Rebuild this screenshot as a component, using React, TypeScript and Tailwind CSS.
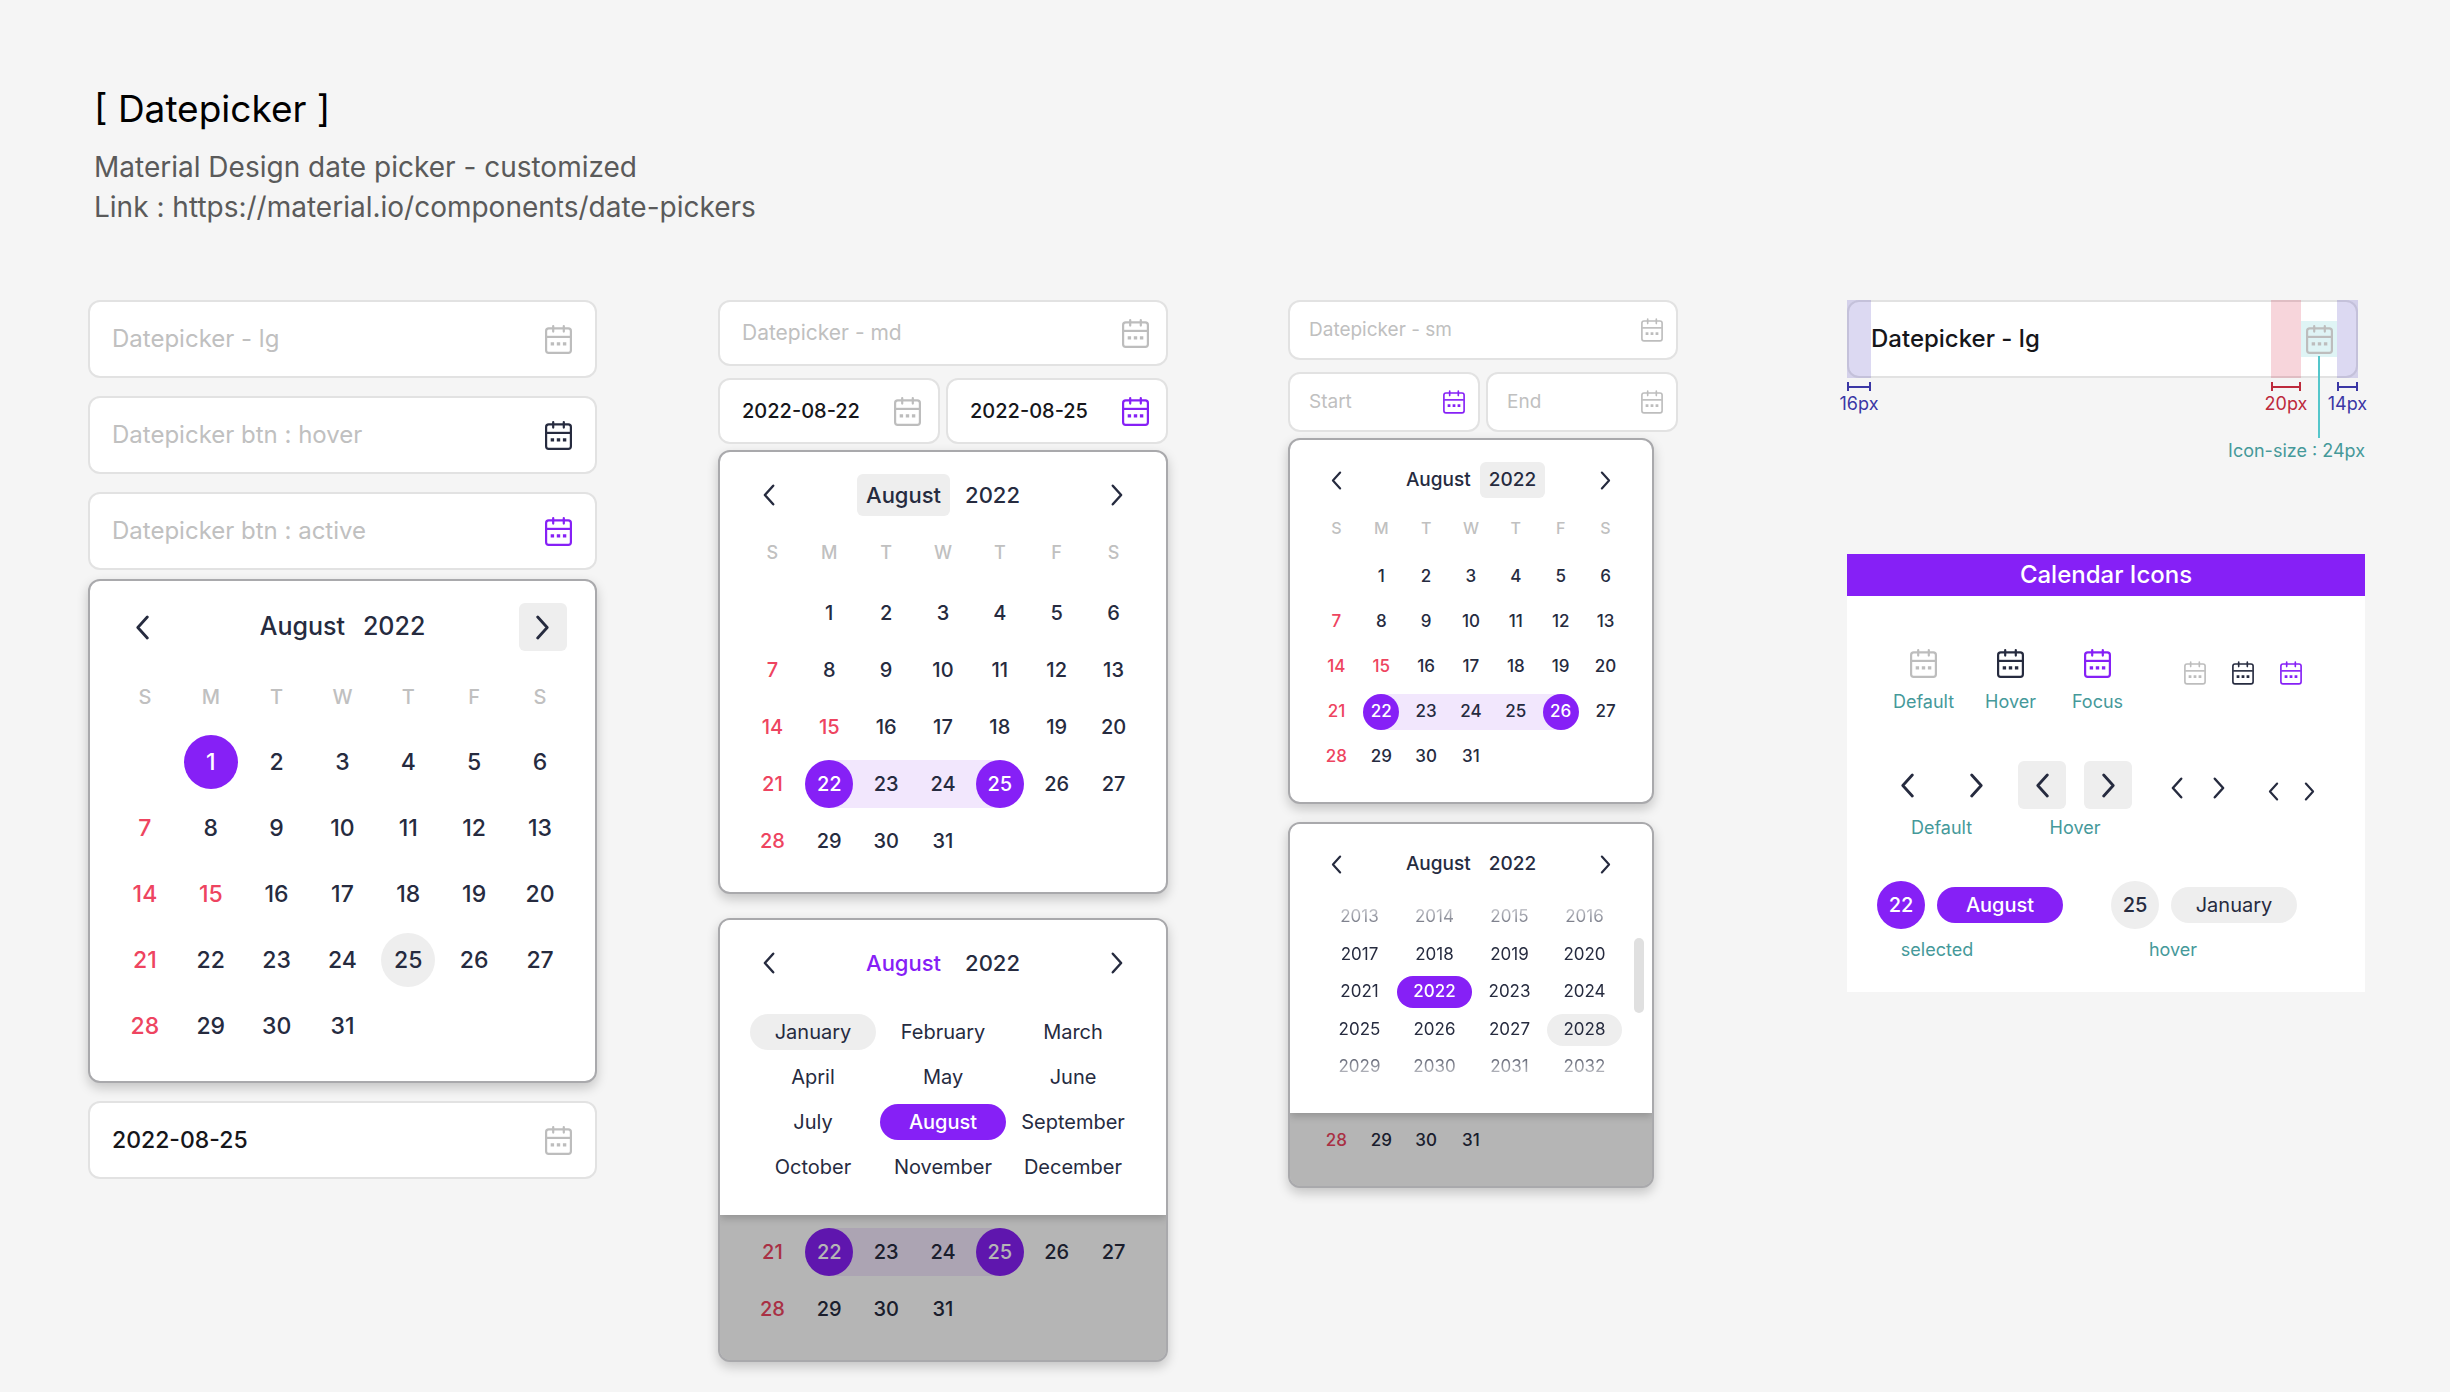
import React from "react";

type Size = "lg" | "md" | "sm";
type Mark = "selected" | "hover" | "start" | "mid" | "end";

const WEEKDAYS = ["S", "M", "T", "W", "T", "F", "S"];
const WEEKDAY_NAMES = ["Sunday", "Monday", "Tuesday", "Wednesday", "Thursday", "Friday", "Saturday"];
const MONTHS = [
  "January", "February", "March", "April", "May", "June",
  "July", "August", "September", "October", "November", "December",
];
const YEARS = Array.from({ length: 20 }, (_, i) => 2013 + i);
const WEEKS: (number | null)[][] = [
  [null, 1, 2, 3, 4, 5, 6],
  [7, 8, 9, 10, 11, 12, 13],
  [14, 15, 16, 17, 18, 19, 20],
  [21, 22, 23, 24, 25, 26, 27],
  [28, 29, 30, 31, null, null, null],
];
const HOLIDAYS = [7, 14, 15, 21, 28];

function CalendarIcon({ small = false }: { small?: boolean }) {
  return (
    <svg
      viewBox="0 0 27 29"
      fill="none"
      stroke="currentColor"
      strokeWidth={small ? 2 : 2.2}
      strokeLinecap="round"
      className={small ? "h-6 w-[22px] shrink-0" : "h-[29px] w-[27px] shrink-0"}
      aria-hidden="true"
    >
      <rect x="1.1" y="3.4" width="24.8" height="24.5" rx="2.6" />
      <path d="M1.5 11.9H25.5" strokeLinecap="butt" />
      <path d="M8.2 1.1V6.6M18.8 1.1V6.6" />
      <path d="M5.7 18.9h3.4M11.8 18.9h3.4M17.9 18.9h3.4" strokeWidth="3.3" strokeLinecap="butt" />
    </svg>
  );
}

const chevronSize = { lg: "h-[25px] w-[13px]", md: "h-[22px] w-3", sm: "h-[19px] w-[11px]" };

function Chevron({ dir, size }: { dir: "left" | "right"; size: Size }) {
  return (
    <svg
      viewBox="0 0 13 25"
      fill="none"
      stroke="currentColor"
      strokeWidth="2.8"
      strokeLinecap="round"
      strokeLinejoin="round"
      className={chevronSize[size]}
      aria-hidden="true"
    >
      <path d={dir === "left" ? "M11.3 2 1.8 12.5 11.3 23" : "M1.7 2 11.2 12.5 1.7 23"} />
    </svg>
  );
}

const navBox = { lg: "size-12", md: "size-[42px]", sm: "size-9" };

function NavButton({ dir, size, hover = false }: { dir: "left" | "right"; size: Size; hover?: boolean }) {
  return (
    <button
      type="button"
      aria-label={dir === "left" ? "Previous" : "Next"}
      className={`flex items-center justify-center rounded-md ${navBox[size]} ${hover ? "bg-[#eeeeee]" : ""}`}
    >
      <Chevron dir={dir} size={size} />
    </button>
  );
}

const fieldSize = {
  lg: "h-[78px] pl-[22px] pr-[23px] text-[24px]",
  md: "h-[66px] pl-[22px] pr-[17px] text-[21px]",
  sm: "h-[60px] pl-[19px] pr-[13px] text-[19px]",
};
const valueSize = { lg: "text-[23px]", md: "text-[20px]", sm: "text-[18px]" };

function Field({
  size,
  placeholder,
  value,
  label,
  icon = "text-[#bdbdbd]",
}: {
  size: Size;
  placeholder?: string;
  value?: string;
  label: string;
  icon?: string;
}) {
  return (
    <div className={`flex w-full min-w-0 items-center rounded-xl border-2 border-[#e2e2e2] bg-white ${fieldSize[size]}`}>
      <input
        type="text"
        aria-label={label}
        placeholder={placeholder}
        defaultValue={value}
        className={`w-full min-w-0 flex-1 bg-transparent outline-none placeholder:text-[#c0c0c0] ${
          value ? `font-medium text-[#16161a] ${valueSize[size]}` : ""
        }`}
      />
      <button type="button" aria-label="Open calendar" className={icon}>
        <CalendarIcon small={size === "sm"} />
      </button>
    </div>
  );
}

const headText = { lg: "h-12 text-[25px]", md: "h-[42px] text-[22px]", sm: "h-9 text-[19px]" };
const headRow = { lg: "px-1.5", md: "px-1", sm: "px-1" };

function Header({
  size,
  month = "",
  year = "",
  nextHover = false,
}: {
  size: Size;
  month?: string;
  year?: string;
  nextHover?: boolean;
}) {
  return (
    <div className={`flex items-center justify-between ${headRow[size]}`}>
      <NavButton dir="left" size={size} />
      <div className={`flex font-medium ${size === "md" ? "gap-1.5" : ""}`}>
        <button type="button" className={`rounded-md px-[9px] ${headText[size]} ${month}`}>
          August
        </button>
        <button type="button" className={`rounded-md px-[9px] ${headText[size]} ${year}`}>
          2022
        </button>
      </div>
      <NavButton dir="right" size={size} hover={nextHover} />
    </div>
  );
}

const cellHeight = { lg: "h-[66px]", md: "h-[57px]", sm: "h-[45px]" };
const bandHeight = { lg: "h-[54px]", md: "h-12", sm: "h-9" };
const circle = { lg: "size-[54px]", md: "size-12", sm: "size-9" };
const dayText = { lg: "text-[23px]", md: "text-[20px]", sm: "text-[17px]" };
const weekdayText = { lg: "h-16 text-[20px]", md: "h-16 text-[18px]", sm: "h-[52px] text-[16px]" };

function band(mark?: Mark) {
  if (mark === "start") return "bg-linear-to-r from-transparent from-50% to-[#f2e7fd] to-50%";
  if (mark === "mid") return "bg-[#f2e7fd]";
  if (mark === "end") return "bg-linear-to-l from-transparent from-50% to-[#f2e7fd] to-50%";
  return "";
}

function dayColor(day: number, mark?: Mark) {
  if (mark === "selected" || mark === "start" || mark === "end") return "bg-[#8620f6] text-white";
  if (mark === "hover") return "bg-[#eeeeee]";
  return HOLIDAYS.includes(day) ? "text-[#ee4460]" : "";
}

function Days({
  size,
  marks = {},
  fromWeek = 0,
}: {
  size: Size;
  marks?: Record<number, Mark>;
  fromWeek?: number;
}) {
  return (
    <table className={`w-full table-fixed border-collapse font-medium ${dayText[size]}`}>
      {fromWeek === 0 && (
        <thead>
          <tr>
            {WEEKDAYS.map((d, i) => (
              <th key={i} abbr={WEEKDAY_NAMES[i]} className={`p-0 font-medium text-[#c0c0c0] ${weekdayText[size]}`}>
                {d}
              </th>
            ))}
          </tr>
        </thead>
      )}
      <tbody>
        {WEEKS.slice(fromWeek).map((week, w) => (
          <tr key={w}>
            {week.map((day, i) => (
              <td key={i} className={`p-0 ${cellHeight[size]}`}>
                {day && (
                  <div className={`flex justify-center ${bandHeight[size]} ${band(marks[day])}`}>
                    <button
                      type="button"
                      className={`shrink-0 rounded-full text-center ${circle[size]} ${dayColor(day, marks[day])}`}
                    >
                      {day}
                    </button>
                  </div>
                )}
              </td>
            ))}
          </tr>
        ))}
      </tbody>
    </table>
  );
}

const CARD =
  "overflow-hidden rounded-xl border-2 border-[#a9a9ac] bg-white text-[#262b3f] shadow-[0_5px_12px_rgba(0,0,0,0.2)]";

function Dimmed({ children, className }: { children: React.ReactNode; className: string }) {
  return (
    <div className={`relative ${className}`}>
      {children}
      <div className="absolute inset-0 bg-black/29" />
    </div>
  );
}

function monthColor(m: string) {
  if (m === "August") return "bg-[#8620f6] font-medium text-white";
  return m === "January" ? "bg-[#eeeeee]" : "";
}

function yearColor(y: number) {
  if (y === 2022) return "bg-[#8620f6] font-medium text-white";
  return y === 2028 ? "bg-[#eeeeee]" : "";
}

function Measure({ className, children }: { className: string; children: string }) {
  return (
    <div className={`shrink-0 ${className}`}>
      <div className="flex h-[9px] items-center border-x-2 border-current">
        <div className="h-0.5 w-full bg-current" />
      </div>
      <div className="flex justify-center text-[18px] leading-[26px] whitespace-nowrap">
        <span>{children}</span>
      </div>
    </div>
  );
}

const CAPTION = "text-center text-[18px] leading-[26px] text-[#45999a]";

function Spec() {
  return (
    <section>
      <div className="mr-[7px]">
        <div className="grid h-[78px]">
          <div className="rounded-xl border-2 border-[#e2e2e2] bg-white [grid-area:1/1]" />
          <div className="flex items-center [grid-area:1/1]">
            <div className="h-full w-6 bg-[rgba(80,64,190,0.2)]" />
            <div className="flex-1 text-[24px] font-medium text-[#16161a]">Datepicker - lg</div>
            <div className="h-full w-[30px] bg-[rgba(215,45,75,0.2)]" />
            <div className="relative flex size-9 items-center justify-center bg-[#dff4f5] text-[#bdbdbd]">
              <CalendarIcon />
              <div className="absolute top-[35px] left-[17px] h-[82px] w-0.5 bg-[#55c6cb]" />
            </div>
            <div className="h-full w-[21px] bg-[rgba(80,64,190,0.2)]" />
          </div>
        </div>
        <div className="mt-1 flex">
          <Measure className="w-6 text-[#3b37a5]">16px</Measure>
          <div className="flex-1" />
          <Measure className="w-[30px] text-[#bd2a3c]">20px</Measure>
          <div className="w-9" />
          <Measure className="w-[21px] text-[#3b37a5]">14px</Measure>
        </div>
      </div>
      <p className="mt-[21px] text-right text-[18px] leading-[26px] text-[#45999a]">Icon-size : 24px</p>
    </section>
  );
}

function IconSheet() {
  return (
    <section className="mt-[90px] bg-white text-[#262b3f]">
      <h2 className="bg-[#8620f6] text-center text-[24px] leading-[42px] font-medium text-white">Calendar Icons</h2>
      <div className="flex pt-[53px] pl-[33px]">
        {[
          ["Default", "text-[#bdbdbd]"],
          ["Hover", ""],
          ["Focus", "text-[#8620f6]"],
        ].map(([name, color]) => (
          <div key={name} className="flex w-[87px] flex-col items-center">
            <div className={color}>
              <CalendarIcon />
            </div>
            <p className={`mt-[11px] ${CAPTION}`}>{name}</p>
          </div>
        ))}
        <div className="mt-3 ml-[30px] flex">
          {["text-[#bdbdbd]", "text-[#262b3f]", "text-[#8620f6]"].map((color) => (
            <div key={color} className={`flex w-12 justify-center ${color}`}>
              <CalendarIcon small />
            </div>
          ))}
        </div>
      </div>
      <div className="mt-[46px] flex pl-9">
        <div>
          <div className="flex gap-[21px]">
            <NavButton dir="left" size="lg" />
            <NavButton dir="right" size="lg" />
          </div>
          <p className={`mt-1.5 ${CAPTION}`}>Default</p>
        </div>
        <div className="ml-[18px]">
          <div className="flex gap-[18px]">
            <NavButton dir="left" size="lg" hover />
            <NavButton dir="right" size="lg" hover />
          </div>
          <p className={`mt-1.5 ${CAPTION}`}>Hover</p>
        </div>
        <div className="ml-6 flex h-12 items-end">
          <NavButton dir="left" size="md" />
          <NavButton dir="right" size="md" />
        </div>
        <div className="ml-[15px] flex h-12 items-end">
          <NavButton dir="left" size="sm" />
          <NavButton dir="right" size="sm" />
        </div>
      </div>
      <div className="mt-10 flex gap-12 pb-[29px] pl-[30px]">
        <div>
          <div className="flex items-center gap-3">
            <button type="button" className="size-12 rounded-full bg-[#8620f6] text-[20px] font-medium text-white">
              22
            </button>
            <button type="button" className="h-9 w-[126px] rounded-full bg-[#8620f6] text-[20px] font-medium text-white">
              August
            </button>
          </div>
          <p className={`mt-2 w-[120px] ${CAPTION}`}>selected</p>
        </div>
        <div>
          <div className="flex items-center gap-3">
            <button type="button" className="size-12 rounded-full bg-[#eeeeee] text-[20px] font-medium">
              25
            </button>
            <button type="button" className="h-9 w-[126px] rounded-full bg-[#eeeeee] text-[20px]">
              January
            </button>
          </div>
          <p className={`mt-2 w-[124px] ${CAPTION}`}>hover</p>
        </div>
      </div>
    </section>
  );
}

export default function App() {
  return (
    <main className="min-h-screen bg-[#f5f5f5] pt-[82px] pr-[85px] pb-[29px] pl-[88px] font-['Inter',sans-serif]">
      <header className="pl-1.5">
        <h1 className="text-[37px] leading-[54px] text-black">[ Datepicker ]</h1>
        <p className="mt-[11px] text-[28px] leading-10 text-[#5a5a5a]">
          Material Design date picker - customized
          <br />
          Link : <a href="https://material.io/components/date-pickers">https://material.io/components/date-pickers</a>
        </p>
      </header>

      <div className="mt-[73px] grid items-start gap-y-12 xl:grid-cols-[630fr_570fr_559fr_518fr]">
        <section className="xl:pr-[121px]">
          <div className="flex flex-col gap-[18px]">
            <Field size="lg" placeholder="Datepicker - lg" label="Large date" />
            <Field size="lg" placeholder="Datepicker btn : hover" label="Large date, hovered" icon="text-[#262b3f]" />
            <Field size="lg" placeholder="Datepicker btn : active" label="Large date, active" icon="text-[#8620f6]" />
          </div>
          <div className={`mt-[9px] px-[22px] pt-[22px] pb-[22px] ${CARD}`}>
            <Header size="lg" nextHover />
            <div className="mt-3.5">
              <Days size="lg" marks={{ 1: "selected", 25: "hover" }} />
            </div>
          </div>
          <div className="mt-[18px]">
            <Field size="lg" value="2022-08-25" label="Chosen date" />
          </div>
        </section>

        <section className="xl:pr-[120px]">
          <Field size="md" placeholder="Datepicker - md" label="Medium date" />
          <div className="mt-3 flex gap-1.5">
            <Field size="md" value="2022-08-22" label="Start date" />
            <Field size="md" value="2022-08-25" label="End date" icon="text-[#8620f6]" />
          </div>
          <div className={`mt-1.5 px-6 pt-[22px] pb-[23px] ${CARD}`}>
            <Header size="md" month="bg-[#eeeeee]" />
            <div className="mt-1">
              <Days size="md" marks={{ 22: "start", 23: "mid", 24: "mid", 25: "end" }} />
            </div>
          </div>
          <div className={`mt-6 ${CARD}`}>
            <div className="relative z-10 bg-white px-6 pt-[22px] pb-[30px] shadow-[0_3px_8px_rgba(0,0,0,0.2)]">
              <Header size="md" month="text-[#8620f6]" />
              <div className="mt-[30px] grid grid-cols-3 gap-y-[9px] px-1 text-[20px]">
                {MONTHS.map((m) => (
                  <button
                    key={m}
                    type="button"
                    className={`h-9 w-[126px] max-w-full justify-self-center rounded-full ${monthColor(m)}`}
                  >
                    {m}
                  </button>
                ))}
              </div>
            </div>
            <Dimmed className="px-6 pt-2 pb-[23px]">
              <Days size="md" fromWeek={3} marks={{ 22: "start", 23: "mid", 24: "mid", 25: "end" }} />
            </Dimmed>
          </div>
        </section>

        <section className="xl:pr-[169px]">
          <Field size="sm" placeholder="Datepicker - sm" label="Small date" />
          <div className="mt-3 flex gap-1.5">
            <Field size="sm" placeholder="Start" label="Start" icon="text-[#8620f6]" />
            <Field size="sm" placeholder="End" label="End" />
          </div>
          <div className={`mt-1.5 mr-6 px-6 pt-[22px] pb-[23px] ${CARD}`}>
            <Header size="sm" year="bg-[#eeeeee]" />
            <div className="mt-1">
              <Days size="sm" marks={{ 22: "start", 23: "mid", 24: "mid", 25: "mid", 26: "end" }} />
            </div>
          </div>
          <div className={`mt-[18px] mr-6 ${CARD}`}>
            <div className="relative z-10 bg-white px-6 pt-[22px] pb-[27px] shadow-[0_3px_8px_rgba(0,0,0,0.2)]">
              <Header size="sm" />
              <div className="mt-4 grid h-[188px] grid-cols-4 grid-rows-5 items-center pr-1.5 pl-2 text-[17px] [mask-image:linear-gradient(to_bottom,transparent,black_40px,black_150px,transparent)]">
                {YEARS.map((y) => (
                  <button key={y} type="button" className={`h-8 rounded-full ${yearColor(y)}`}>
                    {y}
                  </button>
                ))}
              </div>
              <div className="absolute top-[114px] right-2 h-[75px] w-[10px] rounded-full bg-[#e0e0e0]" />
            </div>
            <Dimmed className="px-6 pt-[5px] pb-[23px]">
              <Days size="sm" fromWeek={4} />
            </Dimmed>
          </div>
        </section>

        <div>
          <Spec />
          <IconSheet />
        </div>
      </div>
    </main>
  );
}
